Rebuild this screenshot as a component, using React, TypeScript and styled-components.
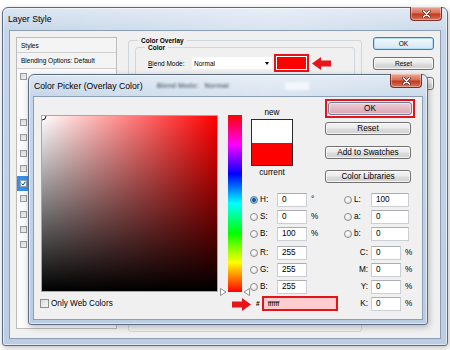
import React from "react";
import styled, { createGlobalStyle, css } from "styled-components";

const GlobalStyle = createGlobalStyle`
  html, body {
    margin: 0;
    padding: 0;
    background: #fff;
  }
  body {
    font-family: "Liberation Sans", Arial, sans-serif;
    color: #000;
  }
`;

const Desktop = styled.div`
  position: relative;
  width: 450px;
  height: 350px;
  overflow: hidden;
  background: #fff;
`;

// ---- window chrome ----

const Window = styled.div<{ $x: number; $y: number; $w: number; $h: number }>`
  position: absolute;
  left: ${(p) => p.$x}px;
  top: ${(p) => p.$y}px;
  width: ${(p) => p.$w}px;
  height: ${(p) => p.$h}px;
  box-sizing: border-box;
  display: flex;
  flex-direction: column;
  border: 1px solid #5a6c83;
  border-radius: 6px 6px 3px 3px;
  background: linear-gradient(180deg, #dbe6f2 0%, #c6d6e8 22px, #bccde1 100%);
  box-shadow: inset 0 0 0 1px rgba(255, 255, 255, 0.55), 1px 2px 6px rgba(0, 0, 0, 0.25);
`;

const TitleBar = styled.div<{ $h: number }>`
  position: relative;
  height: ${(p) => p.$h}px;
  flex: none;
  display: flex;
  align-items: center;
  padding-left: 5px;
  font-size: 8.7px;
  background: linear-gradient(90deg, rgba(255, 255, 255, 0) 0%, rgba(255, 255, 255, 0.35) 60%, rgba(255, 255, 255, 0.1) 100%);
`;

// content of the window below, seen blurred through the glass title bar
const Ghost = styled.span<{ $gap: number }>`
  margin-left: ${(p) => p.$gap}px;
  font-size: 7px;
  font-weight: bold;
  color: #6c7888;
  filter: blur(1.3px);
  white-space: nowrap;
`;

const GhostBox = styled.span`
  margin-left: 56px;
  width: 24px;
  height: 8px;
  background: #f2f7fc;
  filter: blur(1.2px);
`;

const CloseBox = styled.div`
  position: absolute;
  top: -1px;
  right: 5px;
  width: 32px;
  height: 14px;
  box-sizing: border-box;
  border: 1px solid #74322a;
  border-top: none;
  border-radius: 0 0 4px 4px;
  background: linear-gradient(180deg, #e9a898 0%, #d9705a 45%, #c1391f 55%, #d8765e 100%);
  box-shadow: inset 0 0 0 1px rgba(255, 220, 210, 0.45);
  display: flex;
  align-items: center;
  justify-content: center;
`;

const CloseGlyph = () => (
  <svg width="9" height="8" viewBox="0 0 9 8">
    <path d="M1.5 1 L7.5 7 M7.5 1 L1.5 7" stroke="#4a1a12" strokeWidth="2.6" strokeLinecap="round" />
    <path d="M1.5 1 L7.5 7 M7.5 1 L1.5 7" stroke="#fff" strokeWidth="1.6" strokeLinecap="round" />
  </svg>
);

// ---- Layer Style body ----

const LayerBody = styled.div`
  flex: 1;
  margin: 0 6px 6px;
  border: 1px solid #8b9eb6;
  background: #f0f0f0;
  display: flex;
  gap: 11px;
  padding: 6px 6px 6px;
  font-size: 6.5px;
`;

const StylesPanel = styled.div`
  width: 101px;
  box-sizing: border-box;
  display: flex;
  flex-direction: column;
  border: 1px solid #bcbcbc;
  background: #fbfbfb;
  margin-bottom: 3px;
`;

const PanelHeader = styled.div<{ $h: number }>`
  height: ${(p) => p.$h}px;
  flex: none;
  display: flex;
  align-items: center;
  padding-left: 4px;
  border-bottom: 1px solid #cfcfcf;
  background: #f4f4f4;
  white-space: nowrap;
`;

const StyleRow = styled.div<{ $on?: boolean; $indent?: boolean }>`
  height: 15.29px;
  flex: none;
  display: flex;
  align-items: center;
  padding-left: ${(p) => (p.$indent ? 13 : 3)}px;
  ${(p) =>
    p.$on &&
    css`
      background: #3b8fe3;
    `}
`;

const Check = styled.span<{ $on?: boolean }>`
  width: 7px;
  height: 7px;
  box-sizing: border-box;
  flex: none;
  border: 1px solid #9b9b9b;
  background: linear-gradient(135deg, #d8d8d8, #f4f4f4);
  display: flex;
  align-items: center;
  justify-content: center;
  ${(p) =>
    p.$on &&
    css`
      background: #fff;
      border-color: #8aa6c4;
    `}
`;

const Middle = styled.div`
  width: 234px;
  display: flex;
  flex-direction: column;
`;

const GroupBox = styled.fieldset<{ $fill?: boolean }>`
  margin: 0;
  padding: 0 6px 6px;
  min-width: 0;
  border: 1px solid #cfd6dc;
  border-radius: 3px;
  ${(p) =>
    p.$fill &&
    css`
      flex: 1;
    `}
`;

const GroupTitle = styled.legend`
  margin-left: 3px;
  padding: 0 3px;
  font-size: 6.5px;
  font-weight: bold;
`;

const BlendRow = styled.div`
  display: flex;
  align-items: center;
  height: 18px;
  margin-top: 3px;
  margin-bottom: 20px;
`;

const FieldLabel = styled.span`
  width: 44px;
  padding-left: 6px;
  white-space: nowrap;
  u {
    text-decoration: underline;
  }
`;

const Select = styled.div`
  width: 80px;
  height: 12px;
  box-sizing: border-box;
  background: #fff;
  display: flex;
  align-items: center;
  justify-content: space-between;
  padding: 0 3px 0 2px;
  font-size: 6.5px;
`;

const DropArrow = styled.span`
  width: 0;
  height: 0;
  border-left: 2px solid transparent;
  border-right: 2px solid transparent;
  border-top: 3px solid #000;
`;

const SwatchButton = styled.div`
  margin-left: 2px;
  width: 35px;
  height: 18px;
  box-sizing: border-box;
  border: 2px solid #e3141b;
  padding: 1px;
  background: #fff;
  display: flex;
`;

const SwatchFill = styled.span`
  flex: 1;
  background: #ff0000;
`;

const ButtonStack = styled.div`
  width: 61px;
  display: flex;
  flex-direction: column;
  gap: 7px;
`;

const Btn = styled.div<{ $w?: number; $mt?: number; $tone?: "plain" | "default" | "pink" }>`
  width: ${(p) => (p.$w ? `${p.$w}px` : "auto")};
  height: 13px;
  margin-top: ${(p) => p.$mt ?? 0}px;
  box-sizing: border-box;
  flex: none;
  border: 1px solid #707070;
  border-radius: 3px;
  background: linear-gradient(180deg, #f4f4f4 0%, #ebebeb 45%, #dcdcdc 55%, #d0d0d0 100%);
  box-shadow: inset 0 0 0 1px rgba(255, 255, 255, 0.75);
  display: flex;
  align-items: center;
  justify-content: center;
  white-space: nowrap;
  ${(p) =>
    p.$tone === "default" &&
    css`
      border-color: #3c7fb1;
      background: linear-gradient(180deg, #f3f9fd 0%, #e4f0f9 50%, #d3e6f4 100%);
      box-shadow: inset 0 0 0 1px #b5dcf5;
    `}
  ${(p) =>
    p.$tone === "pink" &&
    css`
      border-color: #6f7f98;
      background: linear-gradient(180deg, #eccfd6 0%, #e3b9c4 50%, #d8a6b4 100%);
      box-shadow: inset 0 0 0 1px rgba(255, 230, 236, 0.7);
    `}
`;

// ---- Color Picker body ----

const PickerBody = styled.div`
  flex: 1;
  margin: 0 4px 4px;
  border: 1px solid #8b9eb6;
  background: #f0f0f0;
  display: flex;
  align-items: flex-start;
  gap: 8px;
  padding-left: 7px;
  font-size: 8.2px;
`;

const LeftPane = styled.div`
  display: flex;
  flex-direction: column;
  padding-top: 18px;
`;

const FieldRow = styled.div`
  display: flex;
  gap: 10px;
`;

const ColorField = styled.div`
  position: relative;
  width: 177px;
  height: 177px;
  box-sizing: border-box;
  border: 1px solid #a7a7a7;
  overflow: hidden;
  background: linear-gradient(to top, #000 0%, rgba(0, 0, 0, 0) 100%),
    linear-gradient(to right, #fff 0%, #f00 100%);
`;

const Marker = styled.svg`
  position: absolute;
  left: -5px;
  top: -5px;
`;

const HueWrap = styled.div`
  position: relative;
  width: 14px;
  height: 177px;
`;

const HueBar = styled.div`
  width: 100%;
  height: 100%;
  background: linear-gradient(
    to bottom,
    #f00 0%,
    #f0f 16.7%,
    #00f 33.3%,
    #0ff 50%,
    #0f0 66.7%,
    #ff0 83.3%,
    #f00 100%
  );
`;

const HueTick = styled.svg<{ $side: "left" | "right" }>`
  position: absolute;
  bottom: -4px;
  ${(p) => (p.$side === "left" ? "left: -8px;" : "right: -8px;")}
`;

const WebRow = styled.div`
  display: flex;
  align-items: center;
  gap: 2px;
  margin-top: 7px;
  margin-left: -1px;
`;

const WebCheck = styled.span`
  width: 9px;
  height: 9px;
  box-sizing: border-box;
  border: 1px solid #8f8f8f;
  background: linear-gradient(135deg, #dcdcdc, #f6f6f6);
`;

const RightPane = styled.div`
  display: flex;
  flex-direction: column;
  padding-top: 2px;
`;

const TopRow = styled.div`
  display: flex;
  gap: 31px;
`;

const SwatchCol = styled.div`
  width: 44px;
  display: flex;
  flex-direction: column;
  align-items: center;
  padding-top: 9px;
  gap: 2px;
`;

const CompareBox = styled.div`
  width: 42px;
  height: 47px;
  box-sizing: border-box;
  border: 1px solid #2b2b2b;
  display: flex;
  flex-direction: column;
`;

const CompareHalf = styled.span<{ $c: string }>`
  flex: 1;
  background: ${(p) => p.$c};
`;

const ButtonCol = styled.div`
  display: flex;
  flex-direction: column;
  width: 90px;
`;

const Highlight = styled.div`
  border: 2px solid #e3141b;
  padding: 1px;
  margin-bottom: 4px;
`;

const FieldsArea = styled.div`
  display: flex;
  margin-top: 8px;
`;

const FieldCol = styled.div<{ $w: number }>`
  width: ${(p) => p.$w}px;
  display: flex;
  flex-direction: column;
`;

const FieldGap = styled.div`
  height: 2px;
`;

const ValueRow = styled.div`
  height: 17px;
  display: flex;
  align-items: center;
`;

const Radio = styled.span<{ $on?: boolean }>`
  width: 8px;
  height: 8px;
  flex: none;
  box-sizing: border-box;
  border-radius: 50%;
  border: 1px solid #8c8c8c;
  background: radial-gradient(circle at 40% 35%, #ffffff 0%, #dcdcdc 100%);
  ${(p) =>
    p.$on &&
    css`
      border-color: #5a7fa6;
      background: radial-gradient(circle, #1b5ea8 0 1.6px, #7fb3e4 2.2px, #e4f0fb 100%);
    `}
`;

const NoRadio = styled.span`
  width: 8px;
  flex: none;
`;

const Lbl = styled.span<{ $w: number; $right?: boolean }>`
  width: ${(p) => p.$w}px;
  flex: none;
  margin-left: 2px;
  text-align: ${(p) => (p.$right ? "right" : "left")};
  padding-right: ${(p) => (p.$right ? 3 : 0)}px;
  box-sizing: border-box;
`;

const NumBox = styled.span<{ $w: number }>`
  width: ${(p) => p.$w}px;
  height: 14px;
  flex: none;
  box-sizing: border-box;
  border: 1px solid #cbcfd3;
  border-top-color: #abadb3;
  background: #fff;
  display: flex;
  align-items: center;
  padding-left: 4px;
`;

const Unit = styled.span`
  margin-left: 4px;
`;

const HexRow = styled.div`
  height: 17px;
  display: flex;
  align-items: center;
  padding-left: 6px;
  gap: 2px;
`;

const HexBox = styled.span`
  width: 76px;
  height: 15px;
  box-sizing: border-box;
  border: 2px solid #e3141b;
  background: #ffcdcd;
  display: flex;
  align-items: center;
  padding-left: 4px;
  font-size: 7.5px;
`;

const Hash = styled.span`
  font-size: 6.5px;
  font-weight: bold;
`;

// ---- annotation arrows ----

const ArrowMark = styled.svg<{ $x: number; $y: number }>`
  position: absolute;
  left: ${(p) => p.$x}px;
  top: ${(p) => p.$y}px;
`;

const RedArrow = ({ x, y, dir }: { x: number; y: number; dir: "left" | "right" }) => (
  <ArrowMark $x={x} $y={y} width="19" height="13" viewBox="0 0 19 13">
    <polygon
      fill="#e8141b"
      points="0,6.5 9,0 9,3.5 19,3.5 19,9.5 9,9.5 9,13"
      transform={dir === "right" ? "translate(19,0) scale(-1,1)" : undefined}
    />
  </ArrowMark>
);

// Photoshop CS6 style list; only the checkbox strip is visible beside the picker
const layerRows: { name: string; indent?: boolean; on?: boolean }[] = [
  { name: "bevel" },
  { name: "contour", indent: true },
  { name: "texture", indent: true },
  { name: "stroke" },
  { name: "inner-shadow" },
  { name: "inner-glow" },
  { name: "satin" },
  { name: "color-overlay", on: true },
  { name: "gradient-overlay" },
  { name: "pattern-overlay" },
  { name: "outer-glow" },
  { name: "drop-shadow" },
];

const hsbRgb = [
  { k: "H:", v: "0", u: "°", on: true },
  { k: "S:", v: "0", u: "%" },
  { k: "B:", v: "100", u: "%" },
  null,
  { k: "R:", v: "255" },
  { k: "G:", v: "255" },
  { k: "B:", v: "255" },
];

const labCmyk = [
  { k: "L:", v: "100", radio: true },
  { k: "a:", v: "0", radio: true },
  { k: "b:", v: "0", radio: true },
  null,
  { k: "C:", v: "0", u: "%" },
  { k: "M:", v: "0", u: "%" },
  { k: "Y:", v: "0", u: "%" },
  { k: "K:", v: "0", u: "%" },
];

export default function App() {
  return (
    <>
      <GlobalStyle />
      <Desktop>
        <Window $x={2} $y={7} $w={446} $h={339}>
          <TitleBar $h={22}>
            Layer Style
            <CloseBox>
              <CloseGlyph />
            </CloseBox>
          </TitleBar>
          <LayerBody>
            <StylesPanel>
              <PanelHeader $h={14}>Styles</PanelHeader>
              <PanelHeader $h={15}>Blending Options: Default</PanelHeader>
              {layerRows.map((r) => (
                <StyleRow key={r.name} $on={r.on} $indent={r.indent}>
                  <Check $on={r.on}>
                    {r.on && (
                      <svg width="5" height="5" viewBox="0 0 5 5">
                        <path d="M0.6 2.6 L2 4 L4.4 0.8" stroke="#1d3f73" strokeWidth="1" fill="none" />
                      </svg>
                    )}
                  </Check>
                </StyleRow>
              ))}
            </StylesPanel>
            <Middle>
              <GroupBox $fill>
                <GroupTitle>Color Overlay</GroupTitle>
                <GroupBox>
                  <GroupTitle>Color</GroupTitle>
                  <BlendRow>
                    <FieldLabel>
                      <u>B</u>lend Mode:
                    </FieldLabel>
                    <Select>
                      Normal
                      <DropArrow />
                    </Select>
                    <SwatchButton>
                      <SwatchFill />
                    </SwatchButton>
                  </BlendRow>
                </GroupBox>
              </GroupBox>
            </Middle>
            <ButtonStack>
              <Btn $tone="default">OK</Btn>
              <Btn>Reset</Btn>
              <Btn>New Style...</Btn>
            </ButtonStack>
          </LayerBody>
        </Window>

        <Window $x={28} $y={74} $w={400} $h={251}>
          <TitleBar $h={21}>
            Color Picker (Overlay Color)
            <Ghost $gap={14}>Blend Mode: &nbsp; Normal</Ghost>
            <GhostBox />
            <CloseBox>
              <CloseGlyph />
            </CloseBox>
          </TitleBar>
          <PickerBody>
            <LeftPane>
              <FieldRow>
                <ColorField>
                  <Marker width="10" height="10" viewBox="0 0 10 10">
                    <circle cx="5" cy="5" r="4" fill="none" stroke="#fff" strokeWidth="1.6" />
                    <circle cx="5" cy="5" r="4" fill="none" stroke="#000" strokeWidth="0.9" />
                  </Marker>
                </ColorField>
                <HueWrap>
                  <HueBar />
                  <HueTick $side="left" width="7" height="8" viewBox="0 0 7 8">
                    <polygon points="0.5,0.5 6,4 0.5,7.5" fill="#fff" stroke="#777" strokeWidth="0.8" />
                  </HueTick>
                  <HueTick $side="right" width="7" height="8" viewBox="0 0 7 8">
                    <polygon points="6.5,0.5 1,4 6.5,7.5" fill="#fff" stroke="#777" strokeWidth="0.8" />
                  </HueTick>
                </HueWrap>
              </FieldRow>
              <WebRow>
                <WebCheck />
                Only Web Colors
              </WebRow>
            </LeftPane>
            <RightPane>
              <TopRow>
                <SwatchCol>
                  new
                  <CompareBox>
                    <CompareHalf $c="#ffffff" />
                    <CompareHalf $c="#ff0000" />
                  </CompareBox>
                  current
                </SwatchCol>
                <ButtonCol>
                  <Highlight>
                    <Btn $tone="pink">OK</Btn>
                  </Highlight>
                  <Btn $w={86}>Reset</Btn>
                  <Btn $w={86} $mt={11}>
                    Add to Swatches
                  </Btn>
                  <Btn $w={86} $mt={11}>
                    Color Libraries
                  </Btn>
                </ButtonCol>
              </TopRow>
              <FieldsArea>
                <FieldCol $w={94}>
                  {hsbRgb.map((f, i) =>
                    f ? (
                      <ValueRow key={i}>
                        <Radio $on={f.on} />
                        <Lbl $w={17}>{f.k}</Lbl>
                        <NumBox $w={30}>{f.v}</NumBox>
                        {f.u && <Unit>{f.u}</Unit>}
                      </ValueRow>
                    ) : (
                      <FieldGap key={i} />
                    )
                  )}
                  <HexRow>
                    <Hash>#</Hash>
                    <HexBox>ffffff</HexBox>
                  </HexRow>
                </FieldCol>
                <FieldCol $w={75}>
                  {labCmyk.map((f, i) =>
                    f ? (
                      <ValueRow key={i}>
                        {f.radio ? <Radio /> : <NoRadio />}
                        <Lbl $w={17} $right={!f.radio}>
                          {f.k}
                        </Lbl>
                        <NumBox $w={f.radio ? 38 : 30}>{f.v}</NumBox>
                        {f.u && <Unit>{f.u}</Unit>}
                      </ValueRow>
                    ) : (
                      <FieldGap key={i} />
                    )
                  )}
                </FieldCol>
              </FieldsArea>
            </RightPane>
          </PickerBody>
        </Window>

        <RedArrow x={312} y={57} dir="left" />
        <RedArrow x={232} y={298} dir="right" />
      </Desktop>
    </>
  );
}
